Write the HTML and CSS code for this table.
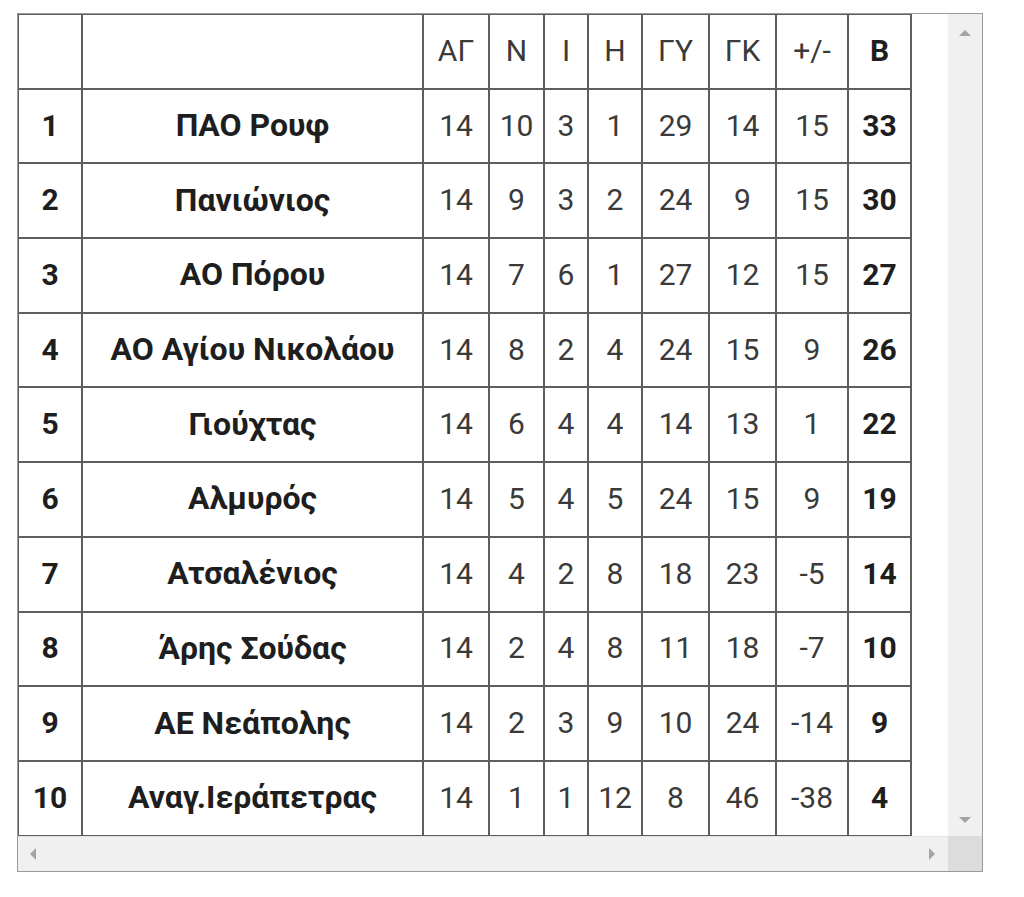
FILE: index.html
```html
<!DOCTYPE html>
<html lang="el">
<head>
<meta charset="utf-8">
<title>Βαθμολογία</title>
<link rel="stylesheet" href="styles.css">
</head>
<body>
<div class="frame">
  <div class="viewport">
    <table class="standings">
      <colgroup>
        <col class="c-pos"><col class="c-team"><col class="c-ag"><col class="c-n"><col class="c-i"><col class="c-h"><col class="c-gy"><col class="c-gk"><col class="c-diff"><col class="c-b">
      </colgroup>
      <thead>
        <tr><th></th><th></th><th>ΑΓ</th><th>Ν</th><th>Ι</th><th>Η</th><th>ΓΥ</th><th>ΓΚ</th><th>+/-</th><th class="b">Β</th></tr>
      </thead>
      <tbody>
        <tr><td class="b">1</td><td class="b team">ΠΑΟ Ρουφ</td><td>14</td><td>10</td><td>3</td><td>1</td><td>29</td><td>14</td><td>15</td><td class="b">33</td></tr>
        <tr><td class="b">2</td><td class="b team">Πανιώνιος</td><td>14</td><td>9</td><td>3</td><td>2</td><td>24</td><td>9</td><td>15</td><td class="b">30</td></tr>
        <tr><td class="b">3</td><td class="b team">ΑΟ Πόρου</td><td>14</td><td>7</td><td>6</td><td>1</td><td>27</td><td>12</td><td>15</td><td class="b">27</td></tr>
        <tr><td class="b">4</td><td class="b team">ΑΟ Αγίου Νικολάου</td><td>14</td><td>8</td><td>2</td><td>4</td><td>24</td><td>15</td><td>9</td><td class="b">26</td></tr>
        <tr><td class="b">5</td><td class="b team">Γιούχτας</td><td>14</td><td>6</td><td>4</td><td>4</td><td>14</td><td>13</td><td>1</td><td class="b">22</td></tr>
        <tr><td class="b">6</td><td class="b team">Αλμυρός</td><td>14</td><td>5</td><td>4</td><td>5</td><td>24</td><td>15</td><td>9</td><td class="b">19</td></tr>
        <tr><td class="b">7</td><td class="b team">Ατσαλένιος</td><td>14</td><td>4</td><td>2</td><td>8</td><td>18</td><td>23</td><td>-5</td><td class="b">14</td></tr>
        <tr><td class="b">8</td><td class="b team">Άρης Σούδας</td><td>14</td><td>2</td><td>4</td><td>8</td><td>11</td><td>18</td><td>-7</td><td class="b">10</td></tr>
        <tr><td class="b">9</td><td class="b team">ΑΕ Νεάπολης</td><td>14</td><td>2</td><td>3</td><td>9</td><td>10</td><td>24</td><td>-14</td><td class="b">9</td></tr>
        <tr><td class="b">10</td><td class="b team">Αναγ.Ιεράπετρας</td><td>14</td><td>1</td><td>1</td><td>12</td><td>8</td><td>46</td><td>-38</td><td class="b">4</td></tr>
      </tbody>
    </table>
  </div>
  <div class="vscroll">
    <span class="arrow up"></span>
    <span class="arrow down"></span>
  </div>
  <div class="hscroll">
    <span class="arrow left"></span>
    <span class="arrow right"></span>
  </div>
  <div class="corner"></div>
</div>
</body>
</html>
```
FILE: styles.css
```css
html, body {
  margin: 0;
  padding: 0;
  background: #ffffff;
}
body {
  padding: 13px 0 0 17px;
  font-family: Roboto, "Noto Sans", Arial, sans-serif;
}
.frame {
  box-sizing: border-box;
  width: 966px;
  height: 859px;
  border: 1px solid #9a9a9a;
  display: grid;
  grid-template-columns: 1fr 34px;
  grid-template-rows: 1fr 35px;
  overflow: hidden;
}
.viewport {
  overflow: hidden;
  background: #fff;
}
.standings {
  border-collapse: collapse;
  table-layout: fixed;
  width: 893px;
  margin-left: -1px;
  margin-top: -1px;
}
.c-pos { width: 64px; }
.c-team { width: 341px; }
.c-ag { width: 66px; }
.c-n { width: 55px; }
.c-i { width: 44px; }
.c-h { width: 54px; }
.c-gy { width: 67px; }
.c-gk { width: 67px; }
.c-diff { width: 72px; }
.c-b { width: 63px; }
.standings tr {
  height: 74.7px;
}
.standings th,
.standings td {
  border: 2px solid #5e5e5e;
  padding: 0 0 2px;
  text-align: center;
  vertical-align: middle;
  font-size: 30px;
  font-weight: 400;
  color: #3a3a3a;
  white-space: nowrap;
  overflow: hidden;
}
.standings .b {
  font-weight: 700;
  color: #1e1e1e;
}
.standings .team {
  font-size: 32px;
}
.vscroll {
  position: relative;
  background: #f0f0f0;
}
.hscroll {
  position: relative;
  background: #f0f0f0;
  border-top: 1px solid #e2e2e2;
}
.corner {
  background: #dcdcdc;
}
.arrow {
  position: absolute;
  width: 0;
  height: 0;
}
.arrow.up {
  left: 11px;
  top: 16px;
  border-left: 6px solid transparent;
  border-right: 6px solid transparent;
  border-bottom: 6px solid #a3a3a3;
}
.arrow.down {
  left: 11px;
  bottom: 13px;
  border-left: 6px solid transparent;
  border-right: 6px solid transparent;
  border-top: 6px solid #a3a3a3;
}
.arrow.left {
  left: 12px;
  top: 11px;
  border-top: 6px solid transparent;
  border-bottom: 6px solid transparent;
  border-right: 6px solid #a3a3a3;
}
.arrow.right {
  right: 13px;
  top: 11px;
  border-top: 6px solid transparent;
  border-bottom: 6px solid transparent;
  border-left: 6px solid #a3a3a3;
}
```
